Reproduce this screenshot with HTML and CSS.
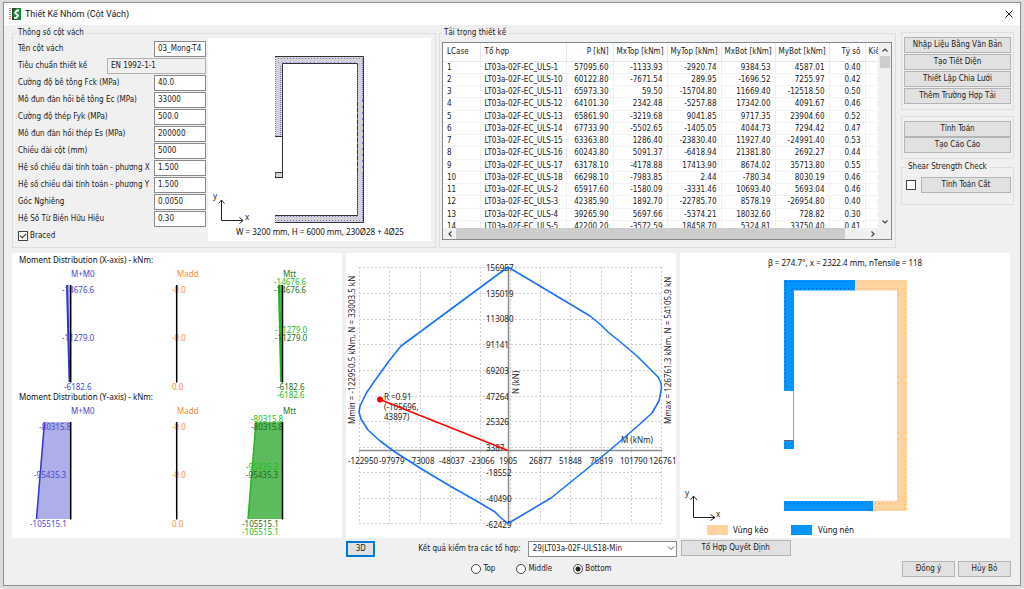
FILE: index.html
```html
<!DOCTYPE html>
<html lang="vi">
<head>
<meta charset="utf-8">
<title>Thiết Kế Nhóm (Cột Vách)</title>
<link rel="stylesheet" href="styles.css">
</head>
<body>
<div class="window">
  <header class="titlebar">
    <svg class="app-icon" viewBox="0 0 12 12" aria-hidden="true">
      <rect x="3" width="9" height="12" fill="#168a3a"/>
      <path d="M3 0h4L4 5v3l4 4H3z" fill="#14502a"/>
      <path d="M10 2.500H8L6 4.500 9 7.500 7 10H5" fill="none" stroke="#fff" stroke-width="1.800"/>
      <path d="M1 0v12" stroke="#e33" stroke-width="1.500" stroke-dasharray="1 1"/>
    </svg>
    <h1 class="title">Thiết Kế Nhóm (Cột Vách)</h1>
    <button class="close" type="button" aria-label="Đóng">
      <svg viewBox="0 0 8 8" width="8" height="8"><path d="M.5.5l7 7M7.500.5l-7 7" stroke="#111" fill="none"/></svg>
    </button>
  </header>

  <section class="top">
    <fieldset class="group params">
      <legend>Thông số cột vách</legend>
      <div class="params-body">
        <div class="form">
          <div class="field"><label for="f1">Tên cột vách</label><input id="f1" value="03_Mong-T4"></div>
          <div class="field"><label for="f2">Tiêu chuẩn thiết kế</label><input id="f2" class="wide" value="EN 1992-1-1" readonly></div>
          <div class="field"><label for="f3">Cường độ bê tông Fck (MPa)</label><input id="f3" value="40.0"></div>
          <div class="field"><label for="f4">Mô đun đàn hồi bê tông Ec (MPa)</label><input id="f4" value="33000"></div>
          <div class="field"><label for="f5">Cường độ thép Fyk (MPa)</label><input id="f5" value="500.0"></div>
          <div class="field"><label for="f6">Mô đun đàn hồi thép Es (MPa)</label><input id="f6" value="200000"></div>
          <div class="field"><label for="f7">Chiều dài cột (mm)</label><input id="f7" value="5000"></div>
          <div class="field"><label for="f8">Hệ số chiều dài tính toán - phương X</label><input id="f8" value="1.500"></div>
          <div class="field"><label for="f9">Hệ số chiều dài tính toán - phương Y</label><input id="f9" value="1.500"></div>
          <div class="field"><label for="f10">Góc Nghiêng</label><input id="f10" value="0.0050"></div>
          <div class="field"><label for="f11">Hệ Số Từ Biến Hữu Hiệu</label><input id="f11" value="0.30"></div>
          <label class="check"><input type="checkbox" class="box" checked>Braced</label>
        </div>
        <svg class="preview" viewBox="208 38 223 203" role="img" aria-label="Tiết diện">
          <path d="M275.500 56.500H363.500V222.500H275.500V215.500H357.500V63.500H282.500V136.500H275.500z" fill="#d3d3d3"/>
          <rect x="275.500" y="172.500" width="7" height="5" fill="#d3d3d3" stroke="#333"/>
          <path d="M275 56.500H363.500V222.500H275M275 215.500H357.500V63.500H282.500V177M275 136.500H283" fill="none" stroke="#333"/>
          <g fill="none" stroke="#7474e8" stroke-dasharray="1 1">
            <path d="M275.500 57V136M280.500 66V136M275.500 216V222M275.500 173V177"/>
            <path d="M278 58.500H361" stroke-dasharray="1 2"/><path d="M278 62.500H356" stroke-dasharray="1 3"/>
            <path d="M362.500 59V100M357.500 66V100M362.500 172V221M357.500 172V215"/>
            <path d="M362.500 100V172M357.500 100V172" stroke-dasharray="2 4"/>
            <path d="M278 216.500H357M278 220.500H362" stroke-dasharray="1 2"/>
          </g>
          <g fill="none" stroke="#222"><path d="M221.500 200V220.500H243M218.500 203.500L221.500 200L224.500 203.500M239.500 217.500L243 220.500L239.500 223.500"/></g>
          <text x="213" y="199">y</text><text x="245" y="220">x</text>
          <text class="caption" x="320" y="235" text-anchor="middle">W = 3200 mm, H = 6000 mm, 230Ø28 + 4Ø25</text>
        </svg>
      </div>
    </fieldset>

    <fieldset class="group loads">
      <legend>Tải trọng thiết kế</legend>
      <div class="grid-box">
        <div class="grid-view">
          <table>
            <colgroup><col class="c-case"><col class="c-combo"><col class="c-p"><col class="c-m"><col class="c-m"><col class="c-m"><col class="c-m"><col class="c-ratio"><col></colgroup>
            <thead><tr><th>LCase</th><th>Tổ hợp</th><th>P [kN]</th><th>MxTop [kNm]</th><th>MyTop [kNm]</th><th>MxBot [kNm]</th><th>MyBot [kNm]</th><th>Tỷ số</th><th>Kiểm</th></tr></thead>
            <tbody>
              <tr><td>1</td><td>LT03a-02F-EC_ULS-1</td><td>57095.60</td><td>-1133.93</td><td>-2920.74</td><td>9384.53</td><td>4587.01</td><td>0.40</td><td></td></tr>
              <tr><td>2</td><td>LT03a-02F-EC_ULS-10</td><td>60122.80</td><td>-7671.54</td><td>289.95</td><td>-1696.52</td><td>7255.97</td><td>0.42</td><td></td></tr>
              <tr><td>3</td><td>LT03a-02F-EC_ULS-11</td><td>65973.30</td><td>59.50</td><td>-15704.80</td><td>11669.40</td><td>-12518.50</td><td>0.50</td><td></td></tr>
              <tr><td>4</td><td>LT03a-02F-EC_ULS-12</td><td>64101.30</td><td>2342.48</td><td>-5257.88</td><td>17342.00</td><td>4091.67</td><td>0.46</td><td></td></tr>
              <tr><td>5</td><td>LT03a-02F-EC_ULS-13</td><td>65861.90</td><td>-3219.68</td><td>9041.85</td><td>9717.35</td><td>23904.60</td><td>0.52</td><td></td></tr>
              <tr><td>6</td><td>LT03a-02F-EC_ULS-14</td><td>67733.90</td><td>-5502.65</td><td>-1405.05</td><td>4044.73</td><td>7294.42</td><td>0.47</td><td></td></tr>
              <tr><td>7</td><td>LT03a-02F-EC_ULS-15</td><td>63363.80</td><td>1286.40</td><td>-23830.40</td><td>11927.40</td><td>-24991.40</td><td>0.53</td><td></td></tr>
              <tr><td>8</td><td>LT03a-02F-EC_ULS-16</td><td>60243.80</td><td>5091.37</td><td>-6418.94</td><td>21381.80</td><td>2692.27</td><td>0.44</td><td></td></tr>
              <tr><td>9</td><td>LT03a-02F-EC_ULS-17</td><td>63178.10</td><td>-4178.88</td><td>17413.90</td><td>8674.02</td><td>35713.80</td><td>0.55</td><td></td></tr>
              <tr><td>10</td><td>LT03a-02F-EC_ULS-18</td><td>66298.10</td><td>-7983.85</td><td>2.44</td><td>-780.34</td><td>8030.19</td><td>0.46</td><td></td></tr>
              <tr><td>11</td><td>LT03a-02F-EC_ULS-2</td><td>65917.60</td><td>-1580.09</td><td>-3331.46</td><td>10693.40</td><td>5693.04</td><td>0.46</td><td></td></tr>
              <tr><td>12</td><td>LT03a-02F-EC_ULS-3</td><td>42385.90</td><td>1892.70</td><td>-22785.70</td><td>8578.19</td><td>-26954.80</td><td>0.40</td><td></td></tr>
              <tr><td>13</td><td>LT03a-02F-EC_ULS-4</td><td>39265.90</td><td>5697.66</td><td>-5374.21</td><td>18032.60</td><td>728.82</td><td>0.30</td><td></td></tr>
              <tr><td>14</td><td>LT03a-02F-EC_ULS-5</td><td>42200.20</td><td>-3572.59</td><td>18458.70</td><td>5324.81</td><td>33750.40</td><td>0.41</td><td></td></tr>
            </tbody>
          </table>
        </div>
        <div class="vscroll">
          <svg viewBox="0 0 6 4" width="6" height="4"><path d="M.5 3.500L3 1l2.500 2.500"/></svg>
          <div class="thumb"></div>
          <svg viewBox="0 0 6 4" width="6" height="4"><path d="M.5.5L3 3 5.500.5"/></svg>
        </div>
        <div class="hscroll">
          <svg viewBox="0 0 4 6" width="4" height="6"><path d="M3.500.5L1 3l2.500 2.500"/></svg>
          <div class="track"><div class="thumb"></div></div>
          <svg viewBox="0 0 4 6" width="4" height="6"><path d="M.5.5L3 3 .5 5.500"/></svg>
        </div>
      </div>
    </fieldset>

    <aside class="side">
      <div class="group stack spaced">
        <button type="button">Nhập Liệu Bằng Văn Bản</button>
        <button type="button">Tạo Tiết Diện</button>
        <button type="button">Thiết Lập Chia Lưới</button>
        <button type="button">Thêm Trường Hợp Tải</button>
      </div>
      <div class="group stack">
        <button type="button">Tính Toán</button>
        <button type="button">Tạo Cáo Cáo</button>
      </div>
      <fieldset class="group shear">
        <legend>Shear Strength Check</legend>
        <div class="shear-row">
          <input type="checkbox" class="box" aria-label="Shear Strength Check">
          <button type="button">Tính Toán Cắt</button>
        </div>
      </fieldset>
    </aside>
  </section>

  <section class="panels">
    <svg class="panel" viewBox="12 253 330 285" role="img" aria-label="Moment Distribution">
      <text class="caption" x="19" y="263">Moment Distribution (X-axis) - kNm:</text>
      <text class="caption" x="19" y="400">Moment Distribution (Y-axis) - kNm:</text>
      <path d="M66.500 285H71V382H69z" fill="#aeaee8"/>
      <path d="M67 285L69.500 382" stroke="#3434d0" stroke-width="2"/>
      <path d="M278 285H283V382H280z" fill="#5cbb5c"/>
      <path d="M279 285L281.500 382" stroke="#22b422" stroke-width="2"/>
      <path d="M44 422H70V519H36z" fill="#aeaee8"/>
      <path d="M44.500 422L36.500 519" stroke="#3434d0" stroke-width="1.500"/>
      <path d="M256 422H282V519H248z" fill="#5cbb5c"/>
      <path d="M256 422L248 519" stroke="#22b422" stroke-width="1.500"/>
      <g class="blue">
        <text x="71" y="277">M+M0</text><text x="62" y="293">-14676.6</text><text x="62" y="341">-11279.0</text><text x="64" y="390">-6182.6</text>
        <text x="71" y="414">M+M0</text><text x="39" y="430">-80315.8</text><text x="34" y="478">-95435.3</text><text x="30" y="527">-105515.1</text>
      </g>
      <g class="orange">
        <text x="177" y="277">Madd</text><text x="172" y="293">-0.0</text><text x="172" y="341">-0.0</text><text x="172" y="390">0.0</text>
        <text x="177" y="414">Madd</text><text x="172" y="430">-0.0</text><text x="172" y="478">-0.0</text><text x="172" y="527">0.0</text>
      </g>
      <g class="lime">
        <text x="274" y="285">-14676.6</text><text x="275" y="333">-11279.0</text><text x="277" y="398">-6182.6</text>
        <text x="251" y="422">-80315.8</text><text x="246" y="470">-95435.3</text><text x="242" y="535">-105515.1</text>
      </g>
      <g class="green">
        <text x="283" y="277">Mtt</text><text x="274" y="293">-14676.6</text><text x="275" y="341">-11279.0</text><text x="277" y="390">-6182.6</text>
        <text x="283" y="414">Mtt</text><text x="251" y="430">-80315.8</text><text x="246" y="478">-95435.3</text><text x="242" y="527">-105515.1</text>
      </g>
      <path d="M70.700 285V382.500M176.700 285V382.500M282.500 285V382.500M70.700 422V519.500M176.700 422V519.500M282.500 422V519.500" stroke="#000" stroke-width="1.500"/>
    </svg>

    <svg class="panel" viewBox="346 253 330 285" role="img" aria-label="Biểu đồ tương tác">
      <path d="M359.500 267V524M389.500 267V524M420.500 267V524M450.500 267V524M480.500 267V524M510.500 267V524M540.500 267V524M570.500 267V524M601.500 267V524M631.500 267V524M661.500 267V524M359 267.500H662M359 293.500H662M359 319.500H662M359 344.500H662M359 370.500H662M359 396.500H662M359 421.500H662M359 447.500H662M359 472.500H662M359 498.500H662M359 523.500H662" stroke="#cfcfcf" stroke-dasharray="2 2"/>
      <path d="M508.500 267V524M359 450.500H662" stroke="#8c8c8c" stroke-width="1.500"/>
      <g class="tick">
        <text x="486" y="271">156957</text><text x="486" y="297">135019</text><text x="486" y="322">113080</text><text x="486" y="348">91141</text><text x="486" y="374">69203</text><text x="486" y="400">47264</text><text x="486" y="425">25326</text><text x="486" y="451">3387</text><text x="486" y="476">-18552</text><text x="486" y="502">-40490</text><text x="486" y="528">-62429</text>
        <text x="348" y="464">-122950</text><text x="379" y="464">-97979</text><text x="409" y="464">-73008</text><text x="439" y="464">-48037</text><text x="469" y="464">-23066</text><text x="499" y="464">1905</text><text x="529" y="464">26877</text><text x="559" y="464">51848</text><text x="590" y="464">76819</text><text x="620" y="464">101790</text><text x="649" y="464">126761</text>
        <text x="621" y="443">M (kNm)</text>
        <text transform="translate(519 394) rotate(-90)">N (kN)</text>
        <text transform="translate(355 424) rotate(-90)">Mmin = -122950.5 kNm, N = 33003.5 kN</text>
        <text transform="translate(671 424) rotate(-90)">Mmax = 126761.3 kNm, N = 54105.9 kN</text>
        <text x="384" y="400">R =0.91</text><text x="384" y="410">(-105696,</text><text x="384" y="420">43897)</text>
      </g>
      <path d="M508 267L401 346L389 361L376 379L367 392L363 400L360 406L359 412L361 419L368 430L380 441L395 452L420 468L450 486L480 503L495 512L500 517L508 523.500L551 498L582 473L610 450L640 424L652 413L659 401L661.500 388L661 383L658 377L637 356L618 340L608 332L602 326L590 316L560 298z" fill="none" stroke="#1870ff" stroke-width="1.600" stroke-linejoin="round"/>
      <path d="M380 399.500L508 450.500" stroke="#f00" stroke-width="1.500"/>
      <circle cx="380" cy="399.500" r="3" fill="#f00"/>
    </svg>

    <svg class="panel" viewBox="680 253 330 285" role="img" aria-label="Vùng kéo và vùng nén">
      <text class="caption" x="845" y="266" text-anchor="middle">β = 274.7°, x = 2322.4 mm, nTensile = 118</text>
      <path d="M855 280H907V511H873V501H897V290.500H855z" fill="#ffd3a0"/>
      <path d="M784 280H855V290.500H794V391H784zM784 501H873V511H784zM784 440H794V449H784z" fill="#0095ff"/>
      <path d="M793.500 391V441" stroke="#5ab0f0"/>
      <path d="M784 440.500H794" stroke="#667"/>
      <g fill="none" stroke="#0058c8" stroke-dasharray="1 3">
        <path d="M785.500 281V390M791.500 290V390M786 281.500H854M792 288.500H854M785 503.500H872M785 509.500H872"/>
        <path d="M785.500 443V448M791.500 443V448"/>
      </g>
      <g fill="none" stroke="#ffb05c" stroke-dasharray="1 3">
        <path d="M857 281.500H906M857 288.500H899M898.500 291V335M904.500 284V335M898.500 456V502M904.500 456V509M875 503.500H898M875 509.500H905"/>
        <path d="M898.500 341V452M904.500 341V452" stroke-dasharray="1 6"/>
      </g>
      <path d="M693.500 496V517.500H715M690.500 500L693.500 496L697 500M710.500 514.500L715 517.500L710.500 520.500" fill="none" stroke="#222"/>
      <text x="685" y="496">y</text><text x="716" y="517">x</text>
      <rect x="707" y="525" width="21" height="10" fill="#ffd3a0"/><text class="caption" x="733" y="533">Vùng kéo</text>
      <rect x="791" y="525" width="21" height="10" fill="#0095ff"/><text class="caption" x="818" y="533">Vùng nén</text>
    </svg>
  </section>

  <footer class="footer">
    <div class="result">
      <div class="result-row">
        <button class="focused" type="button">3D</button>
        <label for="combo">Kết quả kiểm tra các tổ hợp:</label>
        <div class="select">
          <select id="combo"><option>29|LT03a-02F-ULS18-Min</option></select>
          <svg viewBox="0 0 8 5" width="8" height="5"><path d="M1 .5l3 3 3-3" fill="none" stroke="#555"/></svg>
        </div>
      </div>
      <div class="radios">
        <label><input type="radio" name="pos">Top</label>
        <label><input type="radio" name="pos">Middle</label>
        <label><input type="radio" name="pos" checked>Bottom</label>
      </div>
    </div>
    <div class="decide">
      <button class="governing" type="button">Tổ Hợp Quyết Định</button>
      <div class="actions">
        <button type="button">Đồng ý</button>
        <button type="button">Hủy Bỏ</button>
      </div>
    </div>
  </footer>
</div>
</body>
</html>
```
FILE: styles.css
```css
* { box-sizing: border-box; }

body {
  margin: 0;
  min-height: 100vh;
  padding: 2px 3px 3px;
  background: #dcdcdc;
  color: #1a1a1a;
  font: 8px/10px "DejaVu Sans Condensed", "Noto Sans", sans-serif;
  display: flex;
}

button, input, select { font: inherit; color: inherit; margin: 0; }
fieldset { margin: 0; min-width: 0; }
legend { padding: 0 2px; }
svg { display: block; }

.window {
  flex: 1;
  min-width: 0;
  border: 1px solid #8e8e8e;
  background: #f0f0f0;
}

.titlebar {
  display: flex;
  align-items: center;
  gap: 4px;
  height: 22px;
  padding: 0 7px 0 5px;
  background: #fff;
}
.app-icon { width: 12px; height: 12px; }
.title {
  flex: 1;
  margin: 0;
  font: 9px/12px Roboto, "Noto Sans", sans-serif;
}
.close { padding: 0; border: 0; background: none; }

button {
  height: 16px;
  padding: 0;
  border: 1px solid #b4b4b4;
  background: #e1e1e1;
  white-space: nowrap;
}

.top {
  display: grid;
  grid-template-columns: minmax(0, 427fr) minmax(0, 462fr) 113px;
  align-items: start;
  padding: 3px 6px 0 8px;
}
.group { border: 1px solid #dedede; }
.params { padding: 0 4px 6px 5px; margin-right: 3px; }
.params legend { margin-left: -2px; }
.loads { padding: 4px 3px 7px 2px; margin-right: 5px; }

.params-body { display: flex; gap: 2px; }
.form { width: 188px; padding-top: 2px; }
.field {
  display: flex;
  align-items: center;
  justify-content: space-between;
  height: 17px;
  white-space: nowrap;
}
.field input {
  width: 52px;
  height: 16px;
  padding: 0 3px;
  border: 1px solid #8a8a8a;
  background: #fff;
}
.field .wide { width: 99px; background: #f0f0f0; border-color: #b0b0b0; }
.check { display: flex; align-items: center; gap: 2px; margin-top: 4px; }
.box {
  appearance: none;
  width: 10px;
  height: 10px;
  border: 1px solid #444;
  background: #fff;
}
.box:checked::before {
  content: "";
  display: block;
  width: 3px;
  height: 5px;
  margin: 0 2px;
  border: solid #333;
  border-width: 0 1px 1px 0;
  transform: rotate(45deg);
}
.preview { flex: 1; min-width: 0; background: #fff; }

.grid-box {
  display: grid;
  grid-template-columns: 1fr 12px;
  grid-template-rows: 185px 11px;
  border: 1px solid #828790;
  background: #fff;
}
.grid-view { overflow: hidden; min-width: 0; }
table { width: 100%; table-layout: fixed; border-collapse: collapse; }
.c-case { width: 37px; }
.c-combo { width: 86px; }
.c-p { width: 47px; }
.c-m { width: 54px; }
.c-ratio { width: 36px; }
th, td {
  height: 12px;
  padding: 0 4px 0 3px;
  font-weight: normal;
  line-height: 11px;
  text-align: right;
  white-space: nowrap;
  border-right: 1px solid #efefef;
  border-bottom: 1px solid #f4f4f4;
}
tr:nth-child(4n) td { height: 13px; }
th { height: 18px; border-color: #e8e8e8; }
th:first-child, th:nth-child(2), td:first-child, td:nth-child(2) { text-align: left; padding-left: 4px; }
th:last-child { text-align: left; padding-right: 0; overflow: hidden; }
td:last-child { background: linear-gradient(#fff2c8, #fff2c8) no-repeat right center / 1px 5px; }
.vscroll, .hscroll { display: flex; align-items: center; justify-content: space-between; background: #f0f0f0; }
.vscroll { flex-direction: column; padding: 5px 0 4px; }
.vscroll .thumb { width: 10px; height: 12px; margin: 4px 0 auto; }
.hscroll { grid-column: 1 / -1; padding: 0 16px 0 5px; gap: 4px; }
.track { flex: 1; height: 11px; padding-right: 22px; }
.track .thumb { height: 100%; }
.thumb { background: #cdcdcd; }
.vscroll path, .hscroll path { fill: none; stroke: #444; stroke-width: 1.2; }

.side { padding-top: 4px; }
.stack { display: flex; flex-direction: column; padding: 4px 2px 5px; margin-bottom: 6px; }
.spaced { gap: 1px; }
.side .stack:nth-child(2) { margin-bottom: 3px; }
.shear { padding: 5px 2px 11px 4px; }
.shear-row { display: flex; align-items: center; gap: 5px; }
.shear-row button { flex: 1; }

.panels {
  display: grid;
  grid-template-columns: repeat(3, 1fr);
  gap: 4px;
  padding: 5px 10px 0 8px;
}
.panel { width: 100%; background: #fff; }
svg text { font: 8px "Noto Sans", sans-serif; fill: #222; }
svg .caption { fill: #111; }
svg .blue text { fill: #4848cc; }
svg .orange text { fill: #ff8c3a; }
svg .lime text { fill: #22bb22; }
svg .green text { fill: #187018; }

.footer {
  display: grid;
  grid-template-columns: repeat(3, 1fr);
  gap: 4px;
  padding: 2px 9px 8px 8px;
}
.result { grid-column: 2; }
.result-row { display: flex; align-items: center; }
.result-row label { margin-left: auto; }
.focused { width: 29px; border: 2px solid #0078d7; margin-top: 1px; }
.select { display: grid; align-items: center; width: 149px; margin-left: 7px; }
.select > * { grid-area: 1 / 1; }
.select select {
  appearance: none;
  height: 16px;
  padding: 0 4px;
  border: 1px solid #8a8a8a;
  border-radius: 0;
  background: #fff;
}
.select svg { justify-self: end; margin-right: 2px; pointer-events: none; }
.radios { display: flex; justify-content: center; gap: 21px; padding: 7px 0 0 60px; }
.radios label { display: flex; align-items: center; gap: 2px; }
.radios input {
  appearance: none;
  width: 10px;
  height: 10px;
  border: 1px solid #444;
  border-radius: 50%;
  background: #fff;
}
.radios input:checked { background: radial-gradient(#222 0 2px, #fff 3px); }
.governing { width: 110px; }
.actions { display: flex; justify-content: flex-end; gap: 3px; margin-top: 5px; }
.actions button { width: 53px; }
```
